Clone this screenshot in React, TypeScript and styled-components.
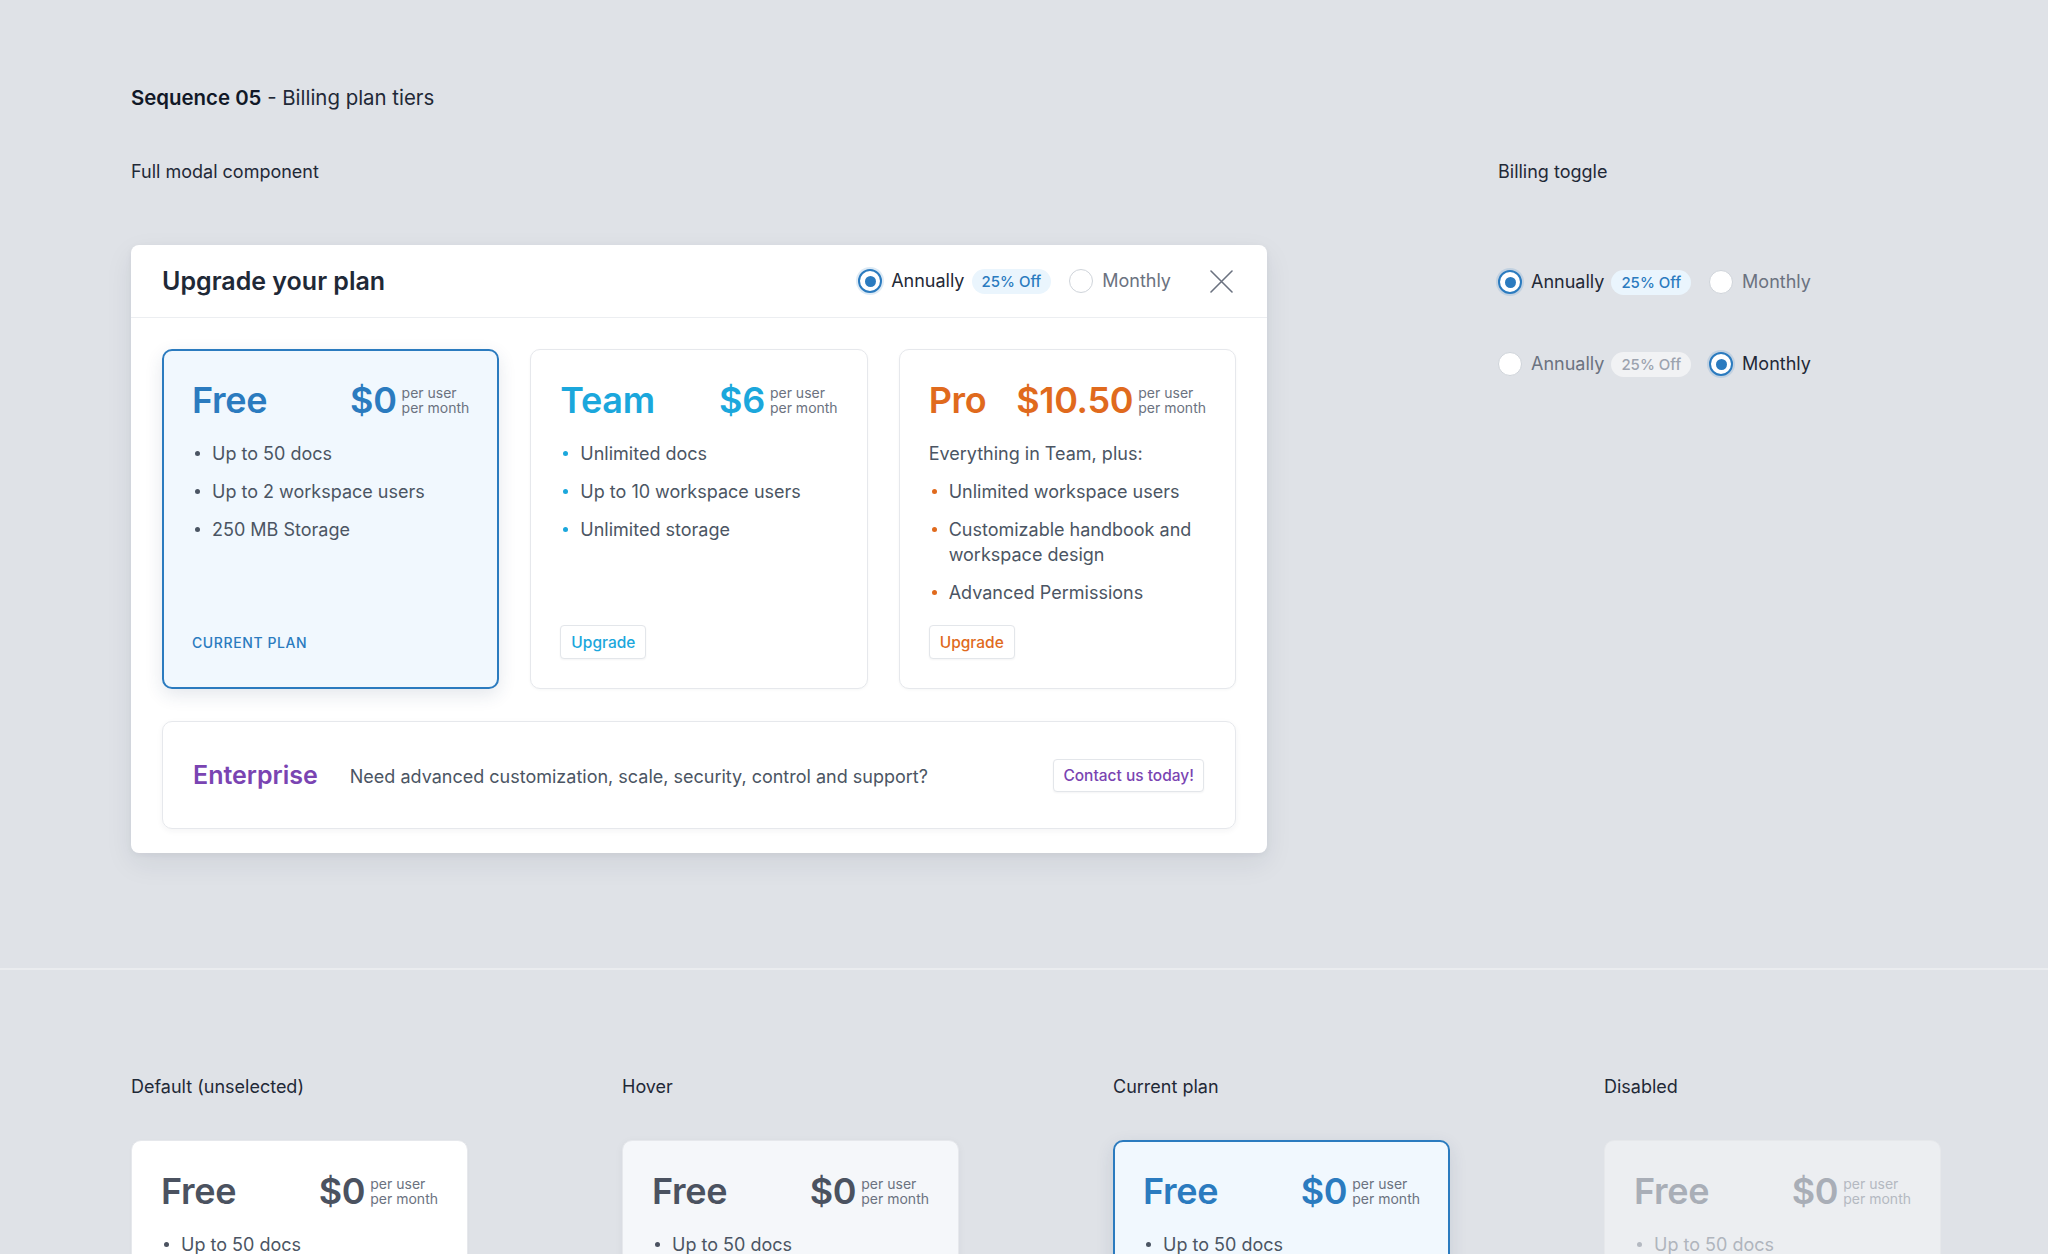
import styled, { createGlobalStyle, css } from "styled-components";

type Variant = "default" | "hover" | "current" | "disabled";

const BLUE = "#2b7bbf";
const CYAN = "#1ba7dc";
const ORANGE = "#e06a1d";
const PURPLE = "#7a44b2";
const TEXT = "#4b5563";

const GlobalStyle = createGlobalStyle`
  html, body {
    margin: 0;
    height: 100%;
    overflow: hidden;
  }
  body {
    background: #dfe2e7;
    color: #1f2937;
    font-family: Inter, "Noto Sans", sans-serif;
  }
`;

const freeFeatures = ["Up to 50 docs", "Up to 2 workspace users", "250 MB Storage"];

const plans = [
  {
    name: "Free",
    price: "$0",
    accent: BLUE,
    features: freeFeatures,
    current: true,
  },
  {
    name: "Team",
    price: "$6",
    accent: CYAN,
    features: ["Unlimited docs", "Up to 10 workspace users", "Unlimited storage"],
  },
  {
    name: "Pro",
    price: "$10.50",
    accent: ORANGE,
    intro: "Everything in Team, plus:",
    features: [
      "Unlimited workspace users",
      "Customizable handbook and workspace design",
      "Advanced Permissions",
    ],
  },
];

const states: { label: string; variant: Variant }[] = [
  { label: "Default (unselected)", variant: "default" },
  { label: "Hover", variant: "hover" },
  { label: "Current plan", variant: "current" },
  { label: "Disabled", variant: "disabled" },
];

const Radio = ({ checked }: { checked: boolean }) => <RadioDot $checked={checked} />;

const BillingToggle = ({ annual }: { annual: boolean }) => (
  <Toggle>
    <Option>
      <Radio checked={annual} />
      <OptionText $active={annual}>Annually</OptionText>
      <Discount $active={annual}>25% Off</Discount>
    </Option>
    <Option>
      <Radio checked={!annual} />
      <OptionText $active={!annual}>Monthly</OptionText>
    </Option>
  </Toggle>
);

type PlanProps = {
  name: string;
  price: string;
  accent: string;
  features: string[];
  intro?: string;
  variant: Variant;
  footer?: "current" | "upgrade";
};

const PlanCard = ({ name, price, accent, features, intro, variant, footer }: PlanProps) => (
  <Card $variant={variant}>
    <CardHead>
      <PlanName $color={accent}>{name}</PlanName>
      <Price>
        <Amount $color={accent}>{price}</Amount>
        <PerUnit $muted={variant === "disabled"}>
          per user
          <br />
          per month
        </PerUnit>
      </Price>
    </CardHead>
    <CardBody>
      {intro && <Intro>{intro}</Intro>}
      <FeatureList>
        {features.map((f) => (
          <Feature key={f} $muted={variant === "disabled"}>
            <Dot $color={variant === "disabled" ? "#b4b9c1" : accent === BLUE ? TEXT : accent} />
            <span>{f}</span>
          </Feature>
        ))}
      </FeatureList>
    </CardBody>
    {footer && (
      <CardFoot>
        {footer === "current" ? (
          <CurrentTag>Current plan</CurrentTag>
        ) : (
          <UpgradeButton $color={accent}>Upgrade</UpgradeButton>
        )}
      </CardFoot>
    )}
  </Card>
);

const stateColor = (v: Variant) =>
  v === "current" ? BLUE : v === "disabled" ? "#a9aeb7" : "#4b5260";

const App = () => (
  <>
    <GlobalStyle />
    <Top>
      <Title>
        <strong>Sequence 05</strong> - Billing plan tiers
      </Title>
      <Columns>
        <div>
          <SectionLabel>Full modal component</SectionLabel>
          <Modal>
            <ModalHeader>
              <ModalTitle>Upgrade your plan</ModalTitle>
              <BillingToggle annual />
              <CloseButton aria-label="Close">
                <svg width="24" height="24" viewBox="0 0 24 24" fill="none">
                  <path d="M2 2L23 23M23 2L2 23" stroke="#6b7280" strokeWidth="1.6" strokeLinecap="round" />
                </svg>
              </CloseButton>
            </ModalHeader>
            <ModalBody>
              <PlanGrid>
                {plans.map((p) => (
                  <PlanCard
                    key={p.name}
                    name={p.name}
                    price={p.price}
                    accent={p.accent}
                    features={p.features}
                    intro={p.intro}
                    variant={p.current ? "current" : "default"}
                    footer={p.current ? "current" : "upgrade"}
                  />
                ))}
              </PlanGrid>
              <Enterprise>
                <EnterpriseName>Enterprise</EnterpriseName>
                <EnterpriseText>
                  Need advanced customization, scale, security, control and support?
                </EnterpriseText>
                <ContactButton>Contact us today!</ContactButton>
              </Enterprise>
            </ModalBody>
          </Modal>
        </div>
        <div>
          <SectionLabel>Billing toggle</SectionLabel>
          <ToggleStack>
            <BillingToggle annual />
            <BillingToggle annual={false} />
          </ToggleStack>
        </div>
      </Columns>
    </Top>
    <Divider />
    <States>
      {states.map((s) => (
        <div key={s.label}>
          <StateLabel>{s.label}</StateLabel>
          <PlanCard
            name="Free"
            price="$0"
            accent={stateColor(s.variant)}
            features={freeFeatures}
            variant={s.variant}
          />
        </div>
      ))}
    </States>
  </>
);

export default App;

const Top = styled.section`
  padding: 86px 0 0 131px;
`;

const Title = styled.h1`
  margin: 0;
  font-size: 20.4px;
  line-height: 24px;
  font-weight: 400;
  color: #1f2937;

  strong {
    font-weight: 600;
    color: #111827;
  }
`;

const Columns = styled.div`
  display: flex;
  align-items: flex-start;
  gap: 231px;
  margin-top: 51px;
`;

const SectionLabel = styled.div`
  font-size: 18px;
  line-height: 22px;
  color: #1f2937;
  margin-bottom: 62px;
`;

const StateLabel = styled(SectionLabel)`
  margin-bottom: 42px;
`;

const Modal = styled.div`
  width: 1136px;
  background: #fff;
  border-radius: 8px;
  box-shadow: 0 10px 28px rgba(30, 41, 59, 0.08), 0 2px 6px rgba(30, 41, 59, 0.05);
`;

const ModalHeader = styled.header`
  display: flex;
  align-items: center;
  height: 72px;
  padding: 0 34px 0 31px;
  border-bottom: 1px solid #eceef1;
`;

const ModalTitle = styled.h2`
  flex: 1;
  margin: 0;
  font-size: 25px;
  line-height: 30px;
  font-weight: 600;
  color: #1f2937;
`;

const CloseButton = styled.button`
  display: flex;
  padding: 0;
  margin-left: 38px;
  border: 0;
  background: none;
  cursor: pointer;
`;

const Toggle = styled.div`
  display: flex;
  align-items: center;
  gap: 18px;
  height: 28px;
`;

const Option = styled.label`
  display: flex;
  align-items: center;
  gap: 9px;
  cursor: pointer;
`;

const RadioDot = styled.span<{ $checked: boolean }>`
  box-sizing: border-box;
  width: 24px;
  height: 24px;
  border-radius: 50%;
  background: #fff;
  display: flex;
  align-items: center;
  justify-content: center;
  ${({ $checked }) =>
    $checked
      ? css`
          border: 2px solid ${BLUE};
          box-shadow: 0 0 0 2px rgba(43, 123, 191, 0.16);
          &::after {
            content: "";
            width: 11px;
            height: 11px;
            border-radius: 50%;
            background: ${BLUE};
          }
        `
      : css`
          border: 1px solid #cfd4da;
        `}
`;

const OptionText = styled.span<{ $active: boolean }>`
  font-size: 18px;
  line-height: 24px;
  color: ${({ $active }) => ($active ? "#1f2937" : "#6b7280")};
`;

const Discount = styled.span<{ $active: boolean }>`
  display: flex;
  align-items: center;
  height: 25px;
  padding: 0 10px;
  margin-left: -2px;
  border-radius: 13px;
  font-size: 15px;
  font-weight: 500;
  background: ${({ $active }) => ($active ? "#eaf5fd" : "#f1f2f4")};
  color: ${({ $active }) => ($active ? BLUE : "#9ca3af")};
`;

const ToggleStack = styled.div`
  display: flex;
  flex-direction: column;
  gap: 54px;
  padding-top: 23px;
`;

const ModalBody = styled.div`
  padding: 31px 31px 24px;
`;

const PlanGrid = styled.div`
  display: grid;
  grid-template-columns: repeat(3, 1fr);
  gap: 31px;
`;

const Card = styled.div<{ $variant: Variant }>`
  box-sizing: border-box;
  display: flex;
  flex-direction: column;
  padding: 29px;
  border: 1px solid #e6e8ec;
  border-radius: 10px;
  background: #fff;
  box-shadow: 0 1px 3px rgba(30, 41, 59, 0.04);
  ${({ $variant }) =>
    $variant === "current" &&
    css`
      padding: 28px;
      border: 2px solid ${BLUE};
      background: #f1f8fe;
      box-shadow: 0 6px 18px rgba(30, 60, 100, 0.12);
    `}
  ${({ $variant }) =>
    $variant === "hover" &&
    css`
      background: #f5f7fa;
      box-shadow: 0 2px 8px rgba(30, 41, 59, 0.05);
    `}
  ${({ $variant }) =>
    $variant === "disabled" &&
    css`
      background: #eceef1;
      border-color: #e6e8eb;
      box-shadow: none;
    `}
`;

const CardHead = styled.div`
  display: flex;
  align-items: center;
  justify-content: space-between;
  height: 42px;
`;

const PlanName = styled.span<{ $color: string }>`
  font-size: 36px;
  line-height: 42px;
  font-weight: 600;
  letter-spacing: -0.3px;
  color: ${({ $color }) => $color};
`;

const Price = styled.div`
  display: flex;
  align-items: center;
  gap: 5px;
`;

const Amount = styled(PlanName)``;

const PerUnit = styled.span<{ $muted: boolean }>`
  font-size: 14px;
  line-height: 15px;
  color: ${({ $muted }) => ($muted ? "#b4b9c1" : "#6b7280")};
`;

const CardBody = styled.div`
  display: flex;
  flex-direction: column;
  gap: 13px;
  margin-top: 20px;
`;

const Intro = styled.p`
  margin: 0;
  font-size: 18px;
  line-height: 25px;
  color: ${TEXT};
`;

const FeatureList = styled.ul`
  display: flex;
  flex-direction: column;
  gap: 13px;
  margin: 0;
  padding: 0;
  list-style: none;
`;

const Feature = styled.li<{ $muted: boolean }>`
  display: flex;
  align-items: flex-start;
  font-size: 18px;
  line-height: 25px;
  color: ${({ $muted }) => ($muted ? "#b0b5bd" : TEXT)};
`;

const Dot = styled.i<{ $color: string }>`
  flex: none;
  width: 5px;
  height: 5px;
  margin: 10px 12px 0 3px;
  border-radius: 50%;
  background: ${({ $color }) => $color};
`;

const CardFoot = styled.div`
  display: flex;
  align-items: center;
  height: 34px;
  margin-top: auto;
  padding-top: 20px;
`;

const CurrentTag = styled.span`
  font-size: 14px;
  font-weight: 500;
  letter-spacing: 0.6px;
  text-transform: uppercase;
  color: ${BLUE};
`;

const UpgradeButton = styled.button<{ $color: string }>`
  height: 34px;
  padding: 0 10px;
  border: 1px solid #e3e6ea;
  border-radius: 4px;
  background: #fff;
  box-shadow: 0 1px 2px rgba(30, 41, 59, 0.05);
  font-family: inherit;
  font-size: 15.5px;
  font-weight: 500;
  color: ${({ $color }) => $color};
  cursor: pointer;
`;

const Enterprise = styled.div`
  box-sizing: border-box;
  display: flex;
  align-items: center;
  height: 108px;
  margin-top: 32px;
  padding: 0 31px 0 30px;
  border: 1px solid #e6e8ec;
  border-radius: 10px;
  box-shadow: 0 2px 6px rgba(30, 41, 59, 0.05);
`;

const EnterpriseName = styled.span`
  margin-right: 32px;
  font-size: 25px;
  font-weight: 600;
  color: ${PURPLE};
`;

const EnterpriseText = styled.span`
  flex: 1;
  font-size: 18px;
  color: ${TEXT};
  padding-top: 3px;
`;

const ContactButton = styled(UpgradeButton).attrs({ $color: PURPLE })`
  height: 33px;
  padding: 0 9px;
  font-size: 15.5px;
`;

const Divider = styled.hr`
  margin: 115px 0 0;
  height: 2px;
  border: 0;
  background: #eaecef;
`;

const States = styled.section`
  display: grid;
  grid-template-columns: repeat(4, 337px);
  column-gap: 154px;
  padding: 106px 0 0 131px;
`;
